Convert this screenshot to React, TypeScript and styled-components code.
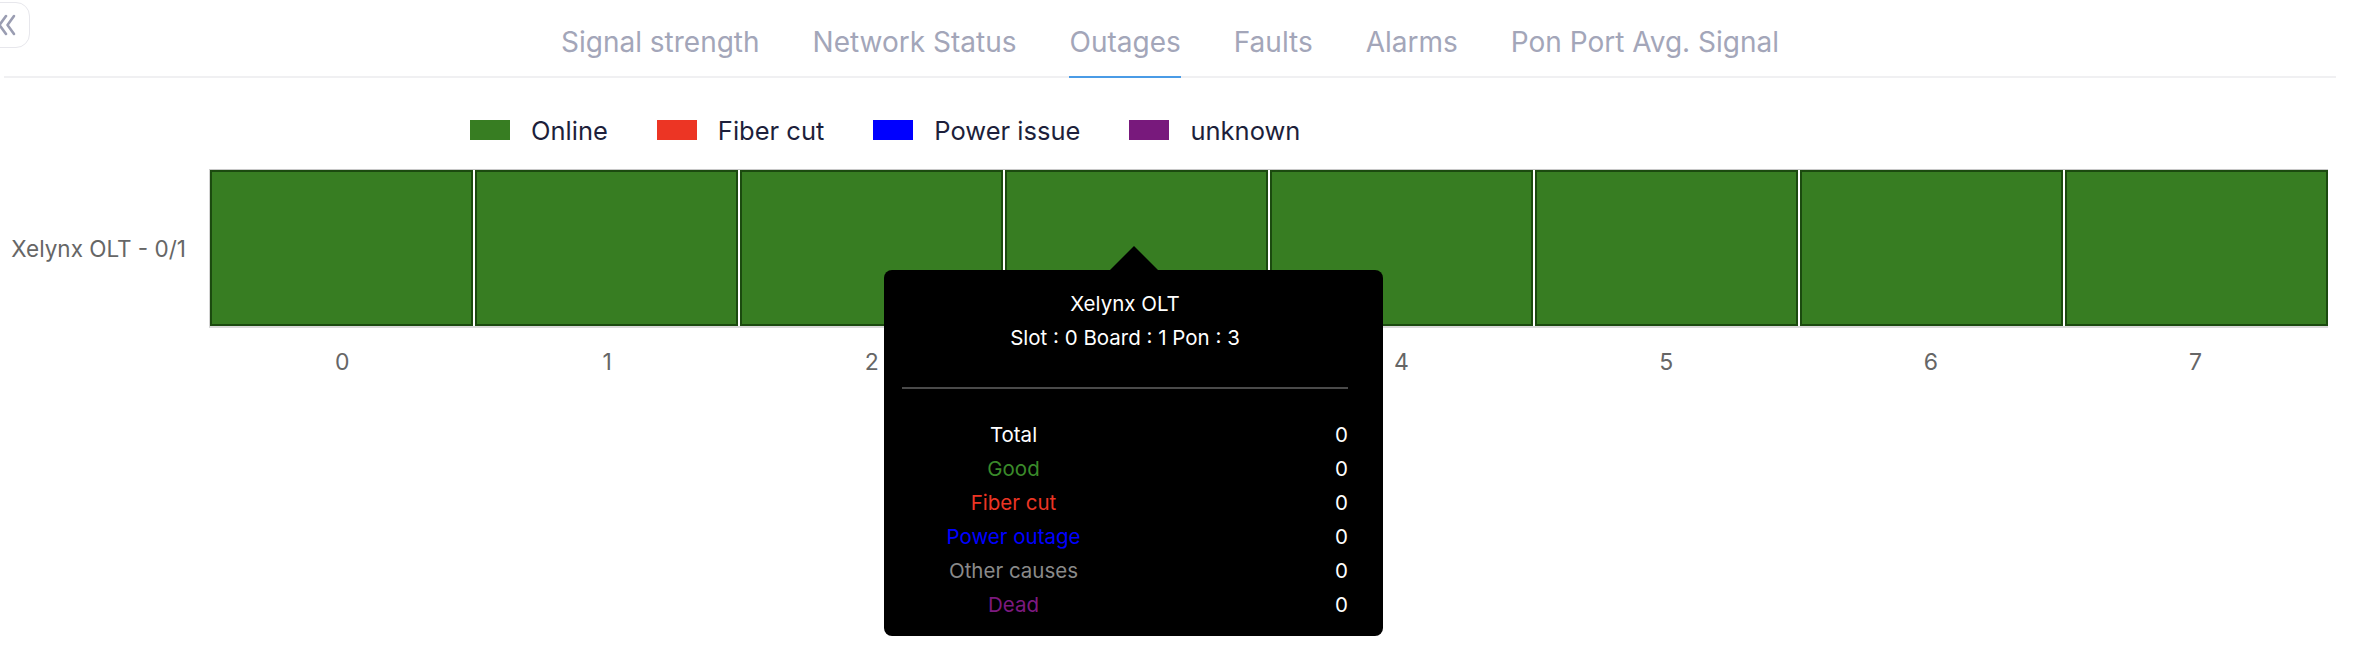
import { Fragment } from 'react';
import styled, { createGlobalStyle } from 'styled-components';

const tabs = [
  'Signal strength',
  'Network Status',
  'Outages',
  'Faults',
  'Alarms',
  'Pon Port Avg. Signal',
];

const legend = [
  { label: 'Online', color: '#377d22' },
  { label: 'Fiber cut', color: '#ec3524' },
  { label: 'Power issue', color: '#0000ff' },
  { label: 'unknown', color: '#78197c' },
];

const ports = [0, 1, 2, 3, 4, 5, 6, 7];

const stats = [
  { label: 'Total', color: '#ffffff', value: 0 },
  { label: 'Good', color: '#3a8a2a', value: 0 },
  { label: 'Fiber cut', color: '#ec3524', value: 0 },
  { label: 'Power outage', color: '#0000ff', value: 0 },
  { label: 'Other causes', color: '#8a8a8a', value: 0 },
  { label: 'Dead', color: '#7d1a80', value: 0 },
];

const GlobalStyle = createGlobalStyle`
  html, body {
    margin: 0;
    background: #ffffff;
    font-family: Inter, "Noto Sans", "Liberation Sans", sans-serif;
  }
`;

const Page = styled.div`
  position: relative;
  width: 2364px;
  height: 668px;
  overflow: hidden;
`;

// half-hidden sidebar toggle in the top-left corner
const CollapseButton = styled.button`
  position: absolute;
  left: -16px;
  top: 2px;
  width: 46px;
  height: 46px;
  display: grid;
  place-items: center;
  padding: 0;
  border: 1.5px solid #e7e7ec;
  border-radius: 14px;
  background: #ffffff;
  color: #9a9db2;
  cursor: pointer;
`;

const TabsBar = styled.nav`
  display: flex;
  justify-content: center;
  gap: 53px;
  height: 76px;
  margin: 0 28px 0 4px;
  border-bottom: 2px solid #f0f0f2;
`;

const Tab = styled.div<{ $active?: boolean }>`
  display: flex;
  align-items: center;
  box-sizing: border-box;
  height: 78px;
  padding-top: 8px;
  margin-bottom: -2px;
  border-bottom: 2px solid ${(p) => (p.$active ? '#4a9be6' : 'transparent')};
  font-size: 28px;
  color: #a3a6b9;
  white-space: nowrap;
`;

const ChartArea = styled.section`
  display: flex;
  flex-direction: column;
`;

const Legend = styled.div`
  display: flex;
  align-items: center;
  gap: 49px;
  height: 32px;
  margin-top: 36px;
  padding-left: 470px;
`;

const LegendItem = styled.div`
  display: flex;
  align-items: center;
  gap: 21px;
  font-size: 25.5px;
  color: #1d1f3b;
`;

const Swatch = styled.span<{ $color: string }>`
  width: 40px;
  height: 20px;
  background: ${(p) => p.$color};
`;

const Row = styled.div`
  display: flex;
  align-items: center;
  margin-top: 23px;
`;

const RowLabel = styled.div`
  width: 186px;
  padding-right: 23px;
  text-align: right;
  font-size: 22.5px;
  color: #666666;
  white-space: nowrap;
`;

const Cells = styled.div`
  flex: 1;
  display: grid;
  grid-template-columns: repeat(8, 1fr);
  gap: 2px;
  height: 156px;
  margin-right: 36px;
  border-top: 1px solid #c8c8c8;
  border-left: 1px solid #d4d4d4;
  border-bottom: 2px solid #dadada;
  background: #ffffff;
`;

const Cell = styled.div<{ $color: string }>`
  background: ${(p) => p.$color};
  border: 2px solid #1b4a0f;
`;

const Axis = styled.div`
  display: grid;
  grid-template-columns: repeat(8, 1fr);
  margin: 20px 36px 0 210px;
`;

const Tick = styled.span`
  text-align: center;
  font-size: 23px;
  line-height: 28px;
  color: #666666;
`;

const Tooltip = styled.div`
  position: absolute;
  left: 884px;
  top: 270px;
  width: 499px;
  box-sizing: border-box;
  padding: 17px 35px 14px 18px;
  border-radius: 8px;
  background: #000000;
  color: #ffffff;
  font-size: 20.5px;

  &::before {
    content: '';
    position: absolute;
    left: 50%;
    top: -24px;
    margin-left: -24px;
    border: 24px solid transparent;
    border-top: 0;
    border-bottom-color: #000000;
  }
`;

const TipTitle = styled.div`
  text-align: center;
  line-height: 34px;
`;

const TipDivider = styled.hr`
  margin: 32px 0 29px;
  border: 0;
  border-top: 2px solid #4a4a4a;
`;

const StatTable = styled.div`
  display: grid;
  grid-template-columns: 1fr 1fr;
`;

const StatLabel = styled.span<{ $color: string }>`
  text-align: center;
  line-height: 34px;
  color: ${(p) => p.$color};
`;

const StatValue = styled.span`
  text-align: right;
  line-height: 34px;
`;

function ChevronsLeft() {
  return (
    <svg width="20" height="22" viewBox="0 0 20 22" fill="none" stroke="currentColor" strokeWidth="2.6" strokeLinecap="round" strokeLinejoin="round">
      <path d="M9 2 2.5 11 9 20" />
      <path d="M17 2 10.5 11 17 20" />
    </svg>
  );
}

export default function App() {
  return (
    <Page>
      <GlobalStyle />
      <CollapseButton aria-label="Collapse">
        <ChevronsLeft />
      </CollapseButton>

      <TabsBar>
        {tabs.map((t) => (
          <Tab key={t} $active={t === 'Outages'}>
            {t}
          </Tab>
        ))}
      </TabsBar>

      <ChartArea>
        <Legend>
          {legend.map((l) => (
            <LegendItem key={l.label}>
              <Swatch $color={l.color} />
              {l.label}
            </LegendItem>
          ))}
        </Legend>

        <Row>
          <RowLabel>Xelynx OLT - 0/1</RowLabel>
          <Cells>
            {ports.map((p) => (
              <Cell key={p} $color="#377d22" />
            ))}
          </Cells>
        </Row>

        <Axis>
          {ports.map((p) => (
            <Tick key={p}>{p}</Tick>
          ))}
        </Axis>
      </ChartArea>

      <Tooltip>
        <TipTitle>Xelynx OLT</TipTitle>
        <TipTitle>Slot : 0 Board : 1 Pon : 3</TipTitle>
        <TipDivider />
        <StatTable>
          {stats.map((s) => (
            <Fragment key={s.label}>
              <StatLabel $color={s.color}>{s.label}</StatLabel>
              <StatValue>{s.value}</StatValue>
            </Fragment>
          ))}
        </StatTable>
      </Tooltip>
    </Page>
  );
}
